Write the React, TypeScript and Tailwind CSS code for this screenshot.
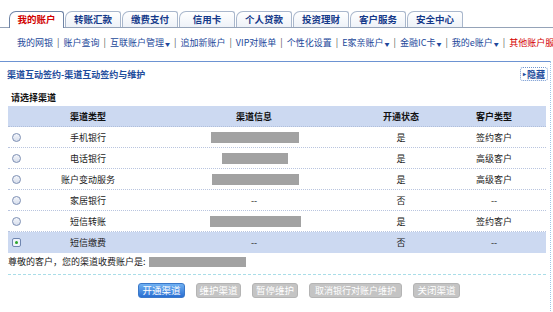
import React from "react";

const tabs = ["我的账户", "转账汇款", "缴费支付", "信用卡", "个人贷款", "投资理财", "客户服务", "安全中心"];

const subnav: { t: string; dd?: boolean; red?: boolean }[] = [
  { t: "我的网银" },
  { t: "账户查询" },
  { t: "互联账户管理", dd: true },
  { t: "追加新账户" },
  { t: "VIP对账单" },
  { t: "个性化设置" },
  { t: "E家亲账户", dd: true },
  { t: "金融IC卡", dd: true },
  { t: "我的e账户", dd: true },
  { t: "其他账户服", red: true },
];

const rows: { type: string; bar: number; status: string; cust: string; sel?: boolean }[] = [
  { type: "手机银行", bar: 88, status: "是", cust: "签约客户" },
  { type: "电话银行", bar: 66, status: "是", cust: "高级客户" },
  { type: "账户变动服务", bar: 87, status: "是", cust: "高级客户" },
  { type: "家居银行", bar: 0, status: "否", cust: "--" },
  { type: "短信转账", bar: 91, status: "是", cust: "签约客户" },
  { type: "短信缴费", bar: 0, status: "否", cust: "--", sel: true },
];

function Radio({ checked }: { checked?: boolean }) {
  return (
    <span
      className={
        checked
          ? "w-[9px] h-[9px] rounded-[2px] border border-[#6f86b0] bg-[#eef3fb] flex items-center justify-center"
          : "w-[9px] h-[9px] rounded-full border border-[#7d8fb3] bg-[linear-gradient(#f4f6fb,#d7deec)]"
      }
    >
      {checked && <span className="w-[3px] h-[3px] rounded-full bg-[#2aa52a]" />}
    </span>
  );
}

export default function App() {
  return (
    <div
      className="w-[553px] h-[312px] bg-white overflow-hidden text-[#222] relative"
      style={{ fontFamily: '"Noto Sans CJK SC", "Noto Sans", sans-serif' }}
    >
      {/* tabs */}
      <div className="flex items-end gap-[1px] pl-[9px] pt-[11px] border-b border-[#95a3b8] h-[28px]">
        {tabs.map((t, i) => (
          <div
            key={t}
            className={
              i === 0
                ? "w-[55px] h-[17px] flex items-center justify-center rounded-tl-[7px] rounded-tr-[3px] border border-b-0 border-[#6f84a6] bg-white text-[#d10000] font-bold text-[9.5px] leading-none mb-[-1px]"
                : "w-[56px] h-[16px] flex items-center justify-center rounded-tl-[7px] rounded-tr-[3px] border border-b-0 border-[#a9b7cc] bg-[linear-gradient(#ffffff,#eef2f8)] text-[#14398a] font-bold text-[9.5px] leading-none"
            }
          >
            {t}
          </div>
        ))}
      </div>

      {/* subnav */}
      <div className="flex items-center pl-[17px] mt-[8px] h-[12px] text-[9px] leading-none whitespace-nowrap">
        {subnav.map((s, i) => (
          <React.Fragment key={s.t}>
            {i > 0 && <span className="mx-[4px] text-[#555]">|</span>}
            <span className={s.red ? "text-[#d40000]" : "text-[#23489a]"}>
              {s.t}
              {s.dd && <span className="text-[5px] ml-[1px] align-middle">▼</span>}
            </span>
          </React.Fragment>
        ))}
      </div>

      {/* main panel */}
      <div className="mt-[13px] w-[551px] border-r border-dotted border-[#9fc3e6] h-[262px]">
        <div className="border-t border-[#6d93d2] h-full">
          <div className="flex items-center justify-between pl-[7px] pr-[2px] mt-[5px] h-[14px]">
            <span className="text-[9px] text-[#1d4c9c] font-bold leading-none">
              渠道互动签约-渠道互动签约与维护
            </span>
            <span className="flex items-center h-[14px] px-[2px] rounded-[3px] border border-dotted border-[#6f95d0] text-[9px] text-[#1d4c9c] leading-none font-bold">
              <span className="text-[6px] mr-[1px]">▸</span>隐藏
            </span>
          </div>

          <div className="pl-[11px] mt-[10px] h-[12px] flex items-center text-[9px] font-bold leading-none text-[#111]">
            请选择渠道
          </div>

          <div className="ml-[8px] w-[538px] mt-[3px]">
            <div className="grid grid-cols-[32px_96px_236px_58px_116px] h-[21px] items-center bg-[#ccd9f1] border-b border-dotted border-[#b0bfdc] text-[9px] font-bold leading-none text-[#111]">
              <span />
              <span className="text-center">渠道类型</span>
              <span className="text-center">渠道信息</span>
              <span className="text-center">开通状态</span>
              <span className="text-center pl-[12px]">客户类型</span>
            </div>
            {rows.map((r) => (
              <div
                key={r.type}
                className={
                  r.sel
                    ? "grid grid-cols-[32px_96px_236px_58px_116px] h-[21px] items-center bg-[#ccd9f1] text-[9px] leading-none text-[#222]"
                    : "grid grid-cols-[32px_96px_236px_58px_116px] h-[21px] items-center border-b border-dotted border-[#b9c5df] text-[9px] leading-none text-[#222]"
                }
              >
                <span className="flex justify-start pl-[4px]">
                  <Radio checked={r.sel} />
                </span>
                <span className="text-center">{r.type}</span>
                <span className="flex justify-center">
                  {r.bar > 0 ? (
                    <span className="h-[11px] bg-[#a2a2a2] ml-[2px]" style={{ width: r.bar }} />
                  ) : (
                    <span>--</span>
                  )}
                </span>
                <span className="text-center">{r.status}</span>
                <span className="text-center pl-[12px]">{r.cust}</span>
              </div>
            ))}

            <div className="flex items-center h-[17px] text-[9px] leading-none text-[#222]">
              <span>尊敬的客户，您的渠道收费账户是:</span>
              <span className="ml-[3px] w-[97px] h-[10px] bg-[#a2a2a2]" />
            </div>
            <div className="mt-[4px] border-t border-dashed border-[#a9dde8]" />

            <div className="flex items-center gap-[11px] mt-[8px] pl-[130px] text-[9.5px] leading-none">
              <span className="w-[47px] h-[15px] flex items-center justify-center rounded-[3px] bg-[linear-gradient(#6fb0f2,#2a6fd2)] text-white border border-[#3b78c8]">
                开通渠道
              </span>
              <span className="w-[45px] h-[15px] flex items-center justify-center rounded-[3px] bg-[#c4c4c4] text-white border border-[#b4b4b4]">
                维护渠道
              </span>
              <span className="w-[46px] h-[15px] flex items-center justify-center rounded-[3px] bg-[#c4c4c4] text-white border border-[#b4b4b4]">
                暂停维护
              </span>
              <span className="w-[93px] h-[15px] flex items-center justify-center rounded-[3px] bg-[#c4c4c4] text-white border border-[#b4b4b4] text-[9px]">
                取消银行对账户维护
              </span>
              <span className="w-[47px] h-[15px] flex items-center justify-center rounded-[3px] bg-[#c4c4c4] text-white border border-[#b4b4b4]">
                关闭渠道
              </span>
            </div>
          </div>
        </div>
      </div>
    </div>
  );
}
